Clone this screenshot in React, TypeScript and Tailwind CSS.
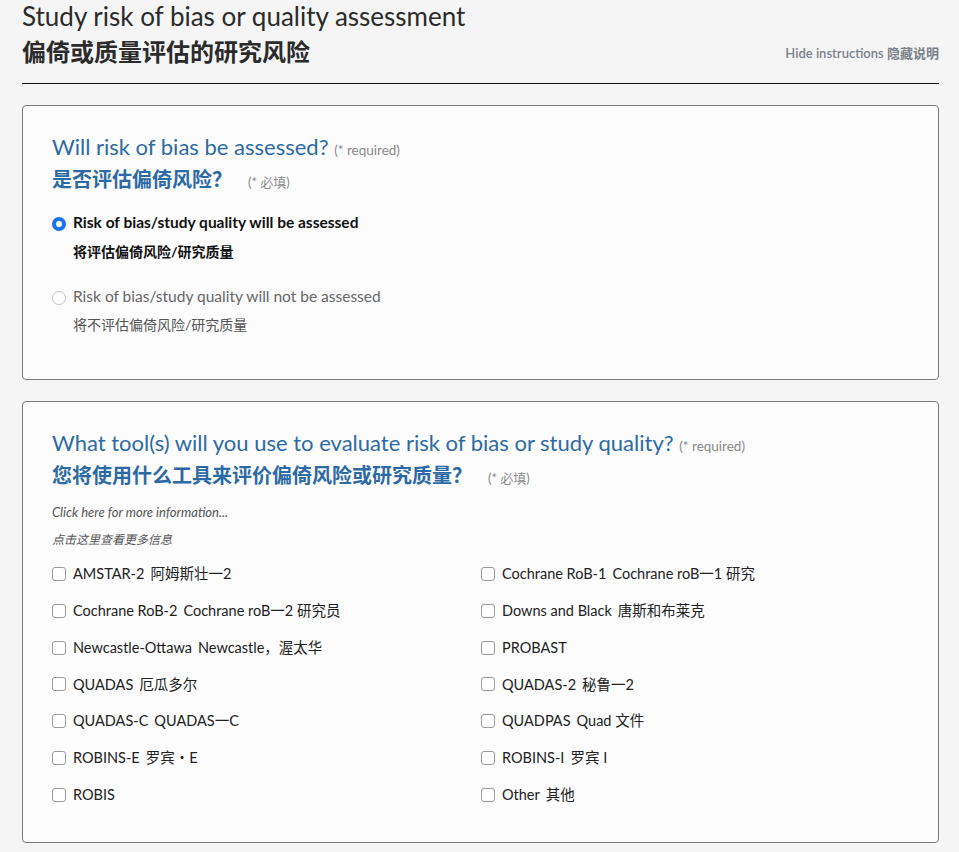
import React from "react";

const TOOLS: [string, string][] = [
  ["AMSTAR-2", "阿姆斯壮一2"],
  ["Cochrane RoB-1", "Cochrane roB一1 研究"],
  ["Cochrane RoB-2", "Cochrane roB一2 研究员"],
  ["Downs and Black", "唐斯和布莱克"],
  ["Newcastle-Ottawa", "Newcastle，渥太华"],
  ["PROBAST", ""],
  ["QUADAS", "厄瓜多尔"],
  ["QUADAS-2", "秘鲁一2"],
  ["QUADAS-C", "QUADAS一C"],
  ["QUADPAS", "Quad 文件"],
  ["ROBINS-E", "罗宾・E"],
  ["ROBINS-I", "罗宾 I"],
  ["ROBIS", ""],
  ["Other", "其他"],
];

const font = "font-['Lato','Noto_Sans_CJK_SC',sans-serif]";

function Radio({ checked }: { checked: boolean }) {
  return checked ? (
    <span className="inline-block w-[14px] h-[14px] rounded-full border-[4px] border-[#1a73e8] bg-white shrink-0" />
  ) : (
    <span className="inline-block w-[14px] h-[14px] rounded-full border border-[#c4c4c4] bg-white shrink-0" />
  );
}

function Checkbox() {
  return <span className="inline-block w-[14px] h-[14px] rounded-[3px] border border-[#9a9a9a] bg-white shrink-0" />;
}

function Question({ en, zh }: { en: string; zh: string }) {
  return (
    <div className="text-[#2c6aa6]">
      <div className="text-[22px] leading-[28px]">
        {en} <span className="text-[13.5px] text-[#8a8a8a]">(* required)</span>
      </div>
      <div className="text-[20px] leading-[28px] font-semibold mt-[1px]">
        {zh}
        <span className="text-[13px] font-normal text-[#8a8a8a] ml-[16px]">(* 必填)</span>
      </div>
    </div>
  );
}

export default function App() {
  return (
    <div className={`min-h-[852px] bg-[#f5f5f5] ${font} text-[#222] pl-[22px] pr-[20px]`}>
      <div className="flex items-end justify-between pt-[1px] pb-[13px] border-b border-[#111]">
        <div>
          <h1 className="text-[26px] leading-[30px] text-[#2b2b2b]">Study risk of bias or quality assessment</h1>
          <h2 className="text-[24px] leading-[36px] font-semibold text-[#2b2b2b] mt-[3px]">偏倚或质量评估的研究风险</h2>
        </div>
        <div className="text-[13px] font-semibold text-[#7b818b] pb-[7px]">Hide instructions 隐藏说明</div>
      </div>

      <section className="mt-[21px] bg-[#fcfcfc] border border-[#7a7a7a] rounded-[4px] pl-[29px] pt-[27px] pb-[42px]">
        <Question en="Will risk of bias be assessed?" zh="是否评估偏倚风险？" />
        <div className="mt-[14px] flex flex-col gap-[20px]">
          <label className="flex items-start gap-[7px]">
            <span className="mt-[3px]"><Radio checked /></span>
            <span>
              <span className="block text-[15.5px] leading-[24px] font-bold text-[#111]">Risk of bias/study quality will be assessed</span>
              <span className="block text-[14px] leading-[24px] font-bold text-[#111] mt-[6px]">将评估偏倚风险/研究质量</span>
            </span>
          </label>
          <label className="flex items-start gap-[7px]">
            <span className="mt-[3px]"><Radio checked={false} /></span>
            <span>
              <span className="block text-[15.5px] leading-[24px] text-[#666]">Risk of bias/study quality will not be assessed</span>
              <span className="block text-[14px] leading-[24px] text-[#555] mt-[5px]">将不评估偏倚风险/研究质量</span>
            </span>
          </label>
        </div>
      </section>

      <section className="mt-[21px] bg-[#fcfcfc] border border-[#7a7a7a] rounded-[4px] pl-[29px] pt-[27px] pb-[36px]">
        <Question en="What tool(s) will you use to evaluate risk of bias or study quality?" zh="您将使用什么工具来评价偏倚风险或研究质量？" />
        <div className="mt-[12px] italic text-[13px] leading-[16px] text-[#555]">Click here for more information...</div>
        <div className="mt-[12px] italic text-[12px] leading-[16px] text-[#555]">点击这里查看更多信息</div>
        <div className="mt-[15px] grid grid-cols-[429px_1fr] gap-y-[14.8px]">
          {TOOLS.map(([en, zh]) => (
            <label key={en} className="flex items-center gap-[7px] h-[22px]">
              <Checkbox />
              <span className="text-[14.5px] text-[#222]">
                {en}
                {zh && <span className="ml-[6px]">{zh}</span>}
              </span>
            </label>
          ))}
        </div>
      </section>
    </div>
  );
}
